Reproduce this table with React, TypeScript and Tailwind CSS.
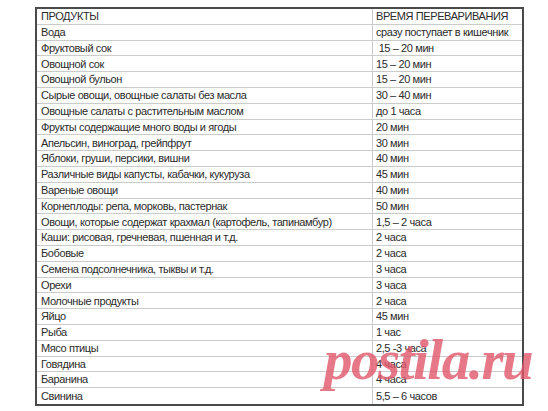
import React from "react";

const rows: [string, string][] = [
  ["Вода", "сразу поступает в кишечник"],
  ["Фруктовый сок", " 15 – 20 мин"],
  ["Овощной сок", "15 – 20 мин"],
  ["Овощной бульон", "15 – 20 мин"],
  ["Сырые овощи, овощные салаты без масла", "30 – 40 мин"],
  ["Овощные салаты с растительным маслом", "до 1 часа"],
  ["Фрукты содержащие много воды и ягоды", "20 мин"],
  ["Апельсин, виноград, грейпфрут", "30 мин"],
  ["Яблоки, груши, персики, вишни", "40 мин"],
  ["Различные виды капусты, кабачки, кукуруза", "45 мин"],
  ["Вареные овощи", "40 мин"],
  ["Корнеплоды: репа, морковь, пастернак", "50 мин"],
  ["Овощи, которые содержат крахмал (картофель, тапинамбур)", "1,5 – 2 часа"],
  ["Каши: рисовая, гречневая, пшенная и т.д.", "2 часа"],
  ["Бобовые", "2 часа"],
  ["Семена подсолнечника, тыквы и т.д.", "3 часа"],
  ["Орехи", "3 часа"],
  ["Молочные продукты", "2 часа"],
  ["Яйцо", "45 мин"],
  ["Рыба", "1 час"],
  ["Мясо птицы", "2,5 -3 часа"],
  ["Говядина", "4 часа"],
  ["Баранина", "4 часа"],
  ["Свинина", "5,5 – 6 часов"],
];

export default function App() {
  return (
    <div className="relative w-[548px] h-[411px] bg-white overflow-hidden font-['Liberation_Sans',sans-serif] text-[#2b2b2b] text-[11px] tracking-[-0.4px]">
      <div className="pt-[7px] pl-[35px]">
        <div className="w-[489px] border-2 border-[#4a4a4a] flex flex-col">
          <div className="flex h-[15.8px] items-center border-b border-[#cbcbcb]">
            <div className="w-[336px] pl-[4px] border-r border-[#cbcbcb] h-full flex items-center">ПРОДУКТЫ</div>
            <div className="flex-1 pl-[3px]">ВРЕМЯ ПЕРЕВАРИВАНИЯ</div>
          </div>
          {rows.map(([name, time], i) => (
            <div
              key={name}
              className={
                "flex h-[15.8px] items-center " +
                (i < rows.length - 1 ? "border-b border-[#cbcbcb]" : "")
              }
            >
              <div className="w-[336px] pl-[4px] border-r border-[#cbcbcb] h-full flex items-center whitespace-nowrap">
                {name}
              </div>
              <div className="flex-1 pl-[3px] whitespace-pre">{time}</div>
            </div>
          ))}
        </div>
      </div>
      <div className="absolute left-[324px] top-[331px] text-[57px] leading-none font-bold italic font-['Liberation_Serif',serif] text-[#e0566a]/80 tracking-[-1.5px]">
        postila.ru
      </div>
    </div>
  );
}
